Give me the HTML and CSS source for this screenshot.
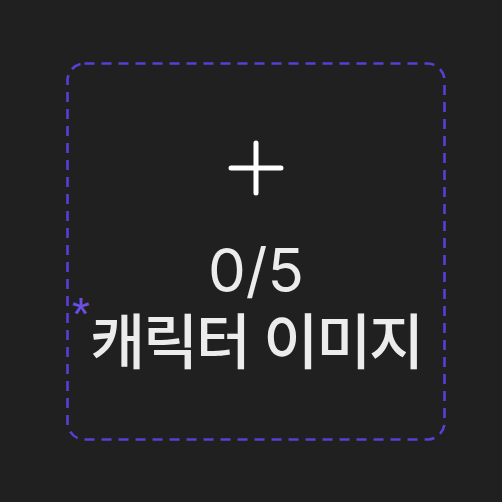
FILE: index.html
```html
<!DOCTYPE html>
<html lang="ko">
<head>
<meta charset="utf-8">
<link rel="stylesheet" href="styles.css">
</head>
<body>
<div class="page">
  <div class="upload">
    <svg class="frame" width="380" height="379" viewBox="0 0 380 379"><rect x="1.5" y="1.5" width="377" height="376" rx="17" fill="none" stroke="#5a3ed6" stroke-width="2.6" stroke-dasharray="10 7"/></svg>
    <svg class="plus" width="56" height="56" viewBox="0 0 56 56"><path d="M28 3V53M3 28H53" stroke="#fff" stroke-width="5" stroke-linecap="round" fill="none"/></svg>
    <div class="count">0/5</div>
    <div class="label"><span class="req">*</span>캐릭터 이미지</div>
  </div>
</div>
</body>
</html>
```

FILE: styles.css
```css
html, body { margin: 0; padding: 0; }
body {
  background: #202020;
  width: 502px;
  height: 502px;
  font-family: "Noto Sans CJK KR", "Noto Sans", sans-serif;
}
.page {
  padding: 62px 0 0 66px;
}
.upload {
  position: relative;
  box-sizing: border-box;
  width: 380px;
  height: 379px;
  display: flex;
  flex-direction: column;
  align-items: center;
  padding-top: 78px;
}
.frame {
  position: absolute;
  left: 0;
  top: 0;
}
.plus { display: block; }
.count {
  margin-top: 44px;
  color: #ececec;
  font-family: Inter, "Liberation Sans", sans-serif;
  font-size: 60px;
  line-height: 61px;
}
.label {
  position: relative;
  color: #ececec;
  font-size: 60px;
  font-weight: 500;
  line-height: 74px;
  letter-spacing: -2.3px;
}
.req {
  position: absolute;
  left: -18px;
  top: -10px;
  color: #6a50e0;
  font-size: 46px;
  line-height: 46px;
  font-weight: 400;
  letter-spacing: 0;
  font-family: "Liberation Sans", Arial, sans-serif;
}
```
